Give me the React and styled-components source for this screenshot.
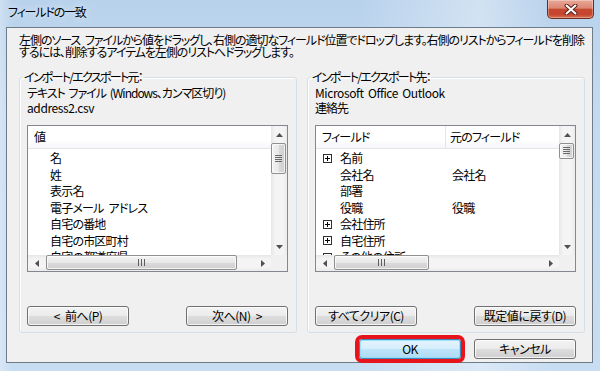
import React from "react";
import styled, { createGlobalStyle, css } from "styled-components";

const GlobalStyle = createGlobalStyle`
  html, body { margin: 0; padding: 0; }
  body {
    width: 600px;
    height: 371px;
    overflow: hidden;
    font-family: "Noto Sans CJK JP", "Liberation Sans", sans-serif;
    font-size: 12px;
    color: #000;
    letter-spacing: -0.8px;
    font-feature-settings: "palt";
  }
  * { box-sizing: border-box; }
`;

const Window = styled.div`
  width: 600px;
  height: 371px;
  display: flex;
  flex-direction: column;
  padding: 0 7px 8px 6px;
  background:
    linear-gradient(90deg, rgba(255,255,255,0.3) 0, rgba(255,255,255,0) 2%, rgba(255,255,255,0) 60%, rgba(255,255,255,0.35) 80%, rgba(255,255,255,0) 92%),
    linear-gradient(180deg, #b9d2ec 0%, #c4daf0 30%, #c8ddf2 100%);
`;

const TitleBar = styled.div`
  height: 27px;
  flex: none;
  display: flex;
  justify-content: space-between;
  align-items: flex-start;
`;

const Title = styled.div`
  margin: 5px 0 0 2px;
  line-height: 14px;
  letter-spacing: -1.2px;
  text-shadow: 0 0 6px rgba(255,255,255,0.9);
`;

const CloseButton = styled.div`
  width: 47px;
  height: 19px;
  margin-right: -1px;
  border: 1px solid #6b2b20;
  border-top: none;
  border-radius: 0 0 5px 5px;
  background: linear-gradient(180deg, #e9a898 0%, #dc8672 45%, #c8472f 52%, #c5452e 80%, #d8704f 100%);
  box-shadow: inset 0 0 0 1px rgba(255,255,255,0.3);
  display: flex;
  align-items: center;
  justify-content: center;
`;

const Client = styled.div`
  flex: 1;
  display: flex;
  flex-direction: column;
  background: #f0f0f0;
  border: 1px solid #6e7b89;
`;

const Instructions = styled.p`
  margin: 6px 0 0 12px;
  line-height: 12px;
  white-space: nowrap;
  letter-spacing: -1.05px;
  word-spacing: 3px;
`;

const Groups = styled.div`
  display: flex;
  gap: 10px;
  height: 263px;
  margin: 12px 7px 0 12px;
`;

const Group = styled.fieldset`
  flex: 1;
  min-width: 0;
  margin: 0;
  padding: 0 8px 6px 7px;
  border: 1px solid #d5dfe5;
  border-radius: 3px;
  box-shadow: inset 1px 1px 0 #fff;
  display: flex;
  flex-direction: column;
`;

const Legend = styled.legend`
  padding: 0 1px;
  margin-left: -4px;
  line-height: 14px;
  letter-spacing: -1.7px;
`;

const SourceLine = styled.div`
  line-height: 15px;
  white-space: nowrap;
  letter-spacing: ${p => (p.$latin ? "-0.4px" : "-1px")};
  word-spacing: 2px;
  &:first-of-type { margin-top: 1px; }
`;

const ListFrame = styled.div`
  margin-top: 10px;
  height: 147px;
  flex: none;
  border: 1px solid #828790;
  background: #fff;
  display: grid;
  grid-template-columns: 1fr 16px;
  grid-template-rows: 1fr 16px;
  overflow: hidden;
`;

const ListBody = styled.div`
  min-width: 0;
  min-height: 0;
  overflow: hidden;
`;

const Header = styled.div`
  height: 23px;
  display: flex;
  border-bottom: 1px solid #e5e5e5;
  background: linear-gradient(180deg, #fff 0%, #fff 60%, #f6f7f9 100%);
`;

const HeaderCell = styled.div`
  flex: ${p => (p.$width ? "none" : "1")};
  width: ${p => (p.$width ? `${p.$width}px` : "auto")};
  padding-left: ${p => p.$pad ?? 6}px;
  line-height: 22px;
  white-space: nowrap;
  border-right: ${p => (p.$divider ? "1px solid #e5e5e5" : "none")};
`;

const Rows = styled.div`
  padding-top: 1px;
`;

const Row = styled.div`
  height: 16.5px;
  line-height: 16.5px;
  display: flex;
  align-items: center;
  white-space: nowrap;
  word-spacing: 3px;
`;

const Cell = styled.div`
  flex: ${p => (p.$width ? "none" : "1")};
  width: ${p => (p.$width ? `${p.$width}px` : "auto")};
  padding-left: ${p => p.$indent}px;
  display: flex;
  align-items: center;
  gap: 8px;
`;

const Expander = styled.svg`
  flex: none;
  display: block;
`;

const VScroll = styled.div`
  display: flex;
  flex-direction: column;
  background: linear-gradient(90deg, #e6e6e6 0%, #f4f4f4 25%, #f4f4f4 75%, #ebebeb 100%);
`;

const HScroll = styled.div`
  display: flex;
  background: linear-gradient(180deg, #e6e6e6 0%, #f4f4f4 25%, #f4f4f4 75%, #ebebeb 100%);
`;

const Arrow = styled.div`
  flex: none;
  width: ${p => (p.$horizontal ? "17px" : "auto")};
  height: ${p => (p.$horizontal ? "auto" : "17px")};
  display: flex;
  align-items: center;
  justify-content: center;
`;

const Track = styled.div`
  flex: 1;
  display: flex;
  flex-direction: ${p => (p.$horizontal ? "row" : "column")};
  padding-left: ${p => (p.$horizontal ? "1px" : "0")};
`;

const Thumb = styled.div`
  flex: none;
  ${p =>
    p.$horizontal
      ? css`
          width: ${p.$size}px;
          height: 15px;
          background: linear-gradient(180deg, #f3f3f3 0%, #e8e8e8 50%, #d9d9d9 51%, #d0d0d0 100%);
        `
      : css`
          height: ${p.$size}px;
          width: 15px;
          background: linear-gradient(90deg, #f3f3f3 0%, #e8e8e8 50%, #d9d9d9 51%, #d0d0d0 100%);
        `}
  border: 1px solid #8f8f8f;
  border-radius: 2px;
  box-shadow: inset 0 0 0 1px rgba(255,255,255,0.7);
  display: flex;
  align-items: center;
  justify-content: center;
`;

const Corner = styled.div`
  background: #f0f0f0;
`;

const ButtonRow = styled.div`
  margin-top: auto;
  display: flex;
  justify-content: space-between;
`;

const Button = styled.button`
  width: 102px;
  height: 20px;
  padding: 0;
  font: inherit;
  letter-spacing: -0.5px;
  word-spacing: 3px;
  line-height: 18px;
  color: #000;
  white-space: nowrap;
  border: 1px solid #707070;
  border-radius: 3px;
  background: linear-gradient(180deg, #f3f3f3 0%, #ebebeb 50%, #dddddd 51%, #cfcfcf 100%);
  box-shadow: inset 0 0 0 1px rgba(255,255,255,0.75);
  ${p =>
    p.$default &&
    css`
      border-color: #3c8abb;
      background: linear-gradient(180deg, #e5f4fc 0%, #d5eefb 50%, #bde4fa 51%, #aedbf4 100%);
      box-shadow: inset 0 0 0 1px rgba(140, 220, 255, 0.8);
      outline: 4px solid #e8141c;
      outline-offset: 0;
    `}
`;

const Footer = styled.div`
  display: flex;
  justify-content: flex-end;
  gap: 13px;
  margin-top: 6px;
  padding-right: 16px;
`;

const Tri = ({ dir }) => {
  const pts = {
    up: "0,4 7,4 3.5,0",
    down: "0,0 7,0 3.5,4",
    left: "4,0 4,7 0,3.5",
    right: "0,0 0,7 4,3.5",
  }[dir];
  const horiz = dir === "left" || dir === "right";
  return (
    <svg width={horiz ? 4 : 7} height={horiz ? 7 : 4} viewBox={horiz ? "0 0 4 7" : "0 0 7 4"}>
      <polygon points={pts} fill="#505050" />
    </svg>
  );
};

const Grip = ({ horizontal }) =>
  horizontal ? (
    <svg width="7" height="7" viewBox="0 0 7 7">
      <path d="M0.5 0v7M3.5 0v7M6.5 0v7" stroke="#5c5c5c" strokeWidth="1" />
    </svg>
  ) : (
    <svg width="7" height="8" viewBox="0 0 7 8">
      <path d="M0 0.5h7M0 2.5h7M0 4.5h7M0 6.5h7" stroke="#6a6a6a" strokeWidth="1" />
    </svg>
  );

const PlusBox = () => (
  <Expander width="9" height="9" viewBox="0 0 9 9">
    <rect x="0.5" y="0.5" width="8" height="8" fill="#fff" stroke="#303030" />
    <path d="M2 4.5h5M4.5 2v5" stroke="#000" />
  </Expander>
);

const ListView = ({ columns, children, vThumb, hThumb }) => (
  <ListFrame>
    <ListBody>
      <Header>
        {columns.map(c => (
          <HeaderCell key={c.label} $width={c.width} $divider={c.divider} $pad={c.pad}>
            {c.label}
          </HeaderCell>
        ))}
      </Header>
      <Rows>{children}</Rows>
    </ListBody>
    <VScroll>
      <Arrow><Tri dir="up" /></Arrow>
      <Track>
        <Thumb $size={vThumb}><Grip /></Thumb>
      </Track>
      <Arrow><Tri dir="down" /></Arrow>
    </VScroll>
    <HScroll>
      <Arrow $horizontal><Tri dir="left" /></Arrow>
      <Track $horizontal>
        <Thumb $horizontal $size={hThumb}><Grip horizontal /></Thumb>
      </Track>
      <Arrow $horizontal><Tri dir="right" /></Arrow>
    </HScroll>
    <Corner />
  </ListFrame>
);

const sourceFields = ["名", "姓", "表示名", "電子メール アドレス", "自宅の番地", "自宅の市区町村", "自宅の都道府県"];

const targetFields = [
  { name: "名前", group: true },
  { name: "会社名", value: "会社名" },
  { name: "部署" },
  { name: "役職", value: "役職" },
  { name: "会社住所", group: true },
  { name: "自宅住所", group: true },
  { name: "その他の住所", group: true },
];

export default function App() {
  return (
    <>
      <GlobalStyle />
      <Window>
        <TitleBar>
          <Title>フィールドの一致</Title>
          <CloseButton>
            <svg width="14" height="11" viewBox="0 0 14 11">
              <path d="M2.5 1.5l9 8M11.5 1.5l-9 8" stroke="#5a2218" strokeWidth="4" strokeLinecap="round" />
              <path d="M2.5 1.5l9 8M11.5 1.5l-9 8" stroke="#fff" strokeWidth="2" strokeLinecap="round" />
            </svg>
          </CloseButton>
        </TitleBar>
        <Client>
          <Instructions>
            左側のソース ファイルから値をドラッグし、右側の適切なフィールド位置でドロップします。右側のリストからフィールドを削除
            <br />
            するには、削除するアイテムを左側のリストへドラッグします。
          </Instructions>
          <Groups>
            <Group>
              <Legend>インポート/エクスポート元：</Legend>
              <SourceLine>テキスト ファイル (Windows、カンマ区切り)</SourceLine>
              <SourceLine $latin>address2.csv</SourceLine>
              <ListView columns={[{ label: "値" }]} vThumb={31} hThumb={191}>
                {sourceFields.map(f => (
                  <Row key={f}>
                    <Cell $indent={22}>{f}</Cell>
                  </Row>
                ))}
              </ListView>
              <ButtonRow>
                <Button>&lt; 前へ(P)</Button>
                <Button>次へ(N) &gt;</Button>
              </ButtonRow>
            </Group>
            <Group>
              <Legend>インポート/エクスポート先：</Legend>
              <SourceLine $latin>Microsoft Office Outlook</SourceLine>
              <SourceLine>連絡先</SourceLine>
              <ListView
                columns={[
                  { label: "フィールド", width: 130, divider: true },
                  { label: "元のフィールド", pad: 4 },
                ]}
                vThumb={16}
                hThumb={95}
              >
                {targetFields.map(f => (
                  <Row key={f.name}>
                    <Cell $width={130} $indent={f.group ? 7 : 24}>
                      {f.group && <PlusBox />}
                      {f.name}
                    </Cell>
                    <Cell $indent={6}>{f.value}</Cell>
                  </Row>
                ))}
              </ListView>
              <ButtonRow>
                <Button>すべてクリア(C)</Button>
                <Button>既定値に戻す(D)</Button>
              </ButtonRow>
            </Group>
          </Groups>
          <Footer>
            <Button $default>OK</Button>
            <Button>キャンセル</Button>
          </Footer>
        </Client>
      </Window>
    </>
  );
}
